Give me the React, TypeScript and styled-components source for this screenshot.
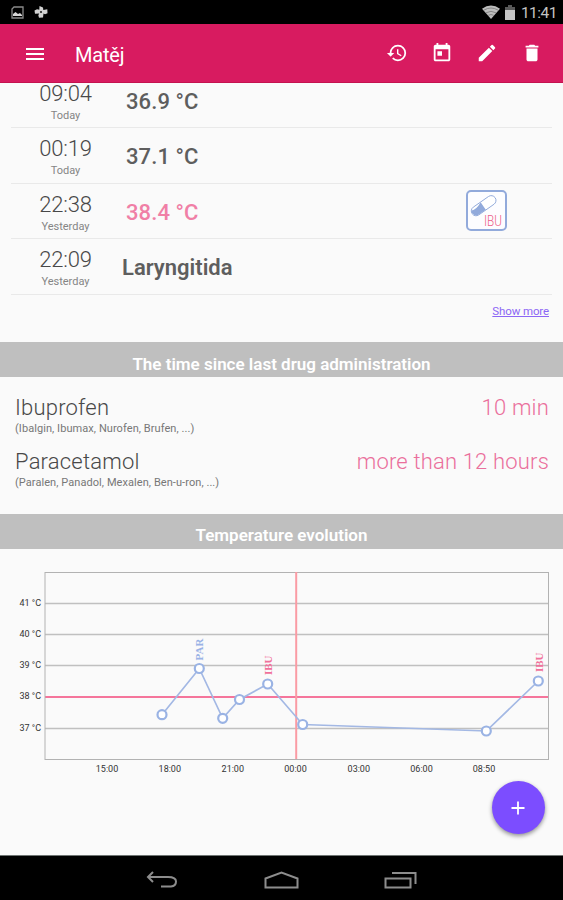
import React from "react";
import styled, { createGlobalStyle } from "styled-components";

const GlobalStyle = createGlobalStyle`
  * { box-sizing: border-box; }
  body { margin: 0; background: #fafafa; font-family: Roboto, sans-serif; }
`;

const Screen = styled.div`
  width: 563px;
  height: 900px;
  display: flex;
  flex-direction: column;
  overflow: hidden;
  background: #fafafa;
  color: #5e5e5e;
`;

const StatusBar = styled.header`
  flex: none;
  height: 24px;
  padding: 0 6px 0 11px;
  display: flex;
  align-items: center;
  background: #000;
  color: #c4c4c4;
`;

const StatusGroup = styled.div<{ $gap: number; $end?: boolean }>`
  display: flex;
  align-items: center;
  gap: ${(p) => p.$gap}px;
  margin-left: ${(p) => (p.$end ? "auto" : "0")};
`;

const Clock = styled.span`
  font-size: 15.5px;
  line-height: 24px;
  letter-spacing: -0.5px;
  padding: 2px 0 0 1px;
`;

const AppBar = styled.nav`
  flex: none;
  height: 59px;
  padding: 0 20px 0 23px;
  display: flex;
  align-items: center;
  background: #d81b60;
  border-bottom: 1px solid #c4124f;
  color: #fff;
`;

const Title = styled.h1`
  margin: 3px 0 0 28px;
  flex: 1;
  font-size: 20px;
  line-height: 24px;
  font-weight: 400;
  letter-spacing: -0.2px;
`;

const Actions = styled.div`
  display: flex;
  gap: 23px;
`;

const IconButton = styled.button`
  border: 0;
  padding: 0;
  background: none;
  color: inherit;
  display: flex;
`;

const MenuButton = styled(IconButton)`
  margin-top: 2px;
`;

const Content = styled.main`
  position: relative;
  flex: none;
  height: 772px;
  overflow: hidden;
`;

const Records = styled.ul`
  list-style: none;
  margin: -10.5px 11px 0;
  padding: 0;
`;

const Record = styled.li`
  height: 55.5px;
  display: flex;
  border-bottom: 1px solid #e9e9e9;
`;

const When = styled.div`
  width: 109px;
  flex: none;
  text-align: center;
`;

const Time = styled.div`
  margin-top: 11px;
  font-size: 22px;
  line-height: 20px;
  font-weight: 300;
  letter-spacing: -0.15px;
  color: #484848;
`;

const Day = styled.div`
  font-size: 11px;
  line-height: 15px;
  margin-top: 4px;
  color: #858585;
`;

const Value = styled.div<{ $high?: boolean; $note?: boolean }>`
  flex: 1;
  margin-top: 15px;
  padding-left: ${(p) => (p.$note ? 2 : 6)}px;
  font-size: 22px;
  line-height: 27px;
  font-weight: ${(p) => (p.$note ? 600 : 500)};
  letter-spacing: ${(p) => (p.$note ? 0 : 0.1)}px;
  color: ${(p) => (p.$high ? "#f07fa6" : "#5e5e5e")};
`;

const DrugBadge = styled.div`
  margin: 6.5px 45px 0 0;
  width: 41px;
  height: 41px;
`;

const MoreRow = styled.div`
  height: 47.5px;
  padding: 5px 14px 0 0;
  text-align: right;
`;

const MoreLink = styled.a`
  font-size: 11.5px;
  line-height: 16px;
  letter-spacing: -0.12px;
  text-decoration: underline;
  color: #8c66f5;
`;

const SectionHeader = styled.h2`
  margin: 0;
  height: 35px;
  padding-top: 8px;
  display: flex;
  align-items: center;
  justify-content: center;
  background: #bfbfbf;
  color: #fff;
  font-size: 17px;
  line-height: 20px;
  font-weight: 600;
`;

const Drugs = styled.section`
  height: 136.5px;
  padding: 16.5px 14px 0 15px;
`;

const Drug = styled.div`
  height: 54px;
`;

const DrugLine = styled.div`
  display: flex;
  justify-content: space-between;
  font-size: 22px;
  line-height: 27px;
`;

const DrugName = styled.span`
  color: #484848;
  font-weight: 300;
  letter-spacing: 0.2px;
`;

const Elapsed = styled.span`
  color: #ea6f9c;
  font-weight: 300;
  letter-spacing: 0.18px;
`;

const Brands = styled.div`
  font-size: 11px;
  line-height: 14px;
  margin-top: 1px;
  letter-spacing: 0.07px;
  color: #777;
`;

const ChartBox = styled.section`
  height: 240px;
  svg { display: block; }
`;

const Fab = styled.button`
  position: absolute;
  right: 18.5px;
  bottom: 21px;
  width: 53px;
  height: 53px;
  padding: 0;
  border: 0;
  border-radius: 50%;
  display: flex;
  align-items: center;
  justify-content: center;
  background: #7c4dff;
  box-shadow: 0 2px 4px rgba(0, 0, 0, 0.42);
`;

const NavBar = styled.footer`
  flex: none;
  height: 45px;
  display: flex;
  align-items: center;
  justify-content: center;
  gap: 85px;
  padding-top: 3px;
  background: #000;
  border-top: 1px solid #6e7472;
`;

const records = [
  { time: "09:04", day: "Today", value: "36.9 °C" },
  { time: "00:19", day: "Today", value: "37.1 °C" },
  { time: "22:38", day: "Yesterday", value: "38.4 °C", high: true, drug: true },
  { time: "22:09", day: "Yesterday", value: "Laryngitida", note: true },
];

const drugs = [
  { name: "Ibuprofen", brands: "(Ibalgin, Ibumax, Nurofen, Brufen, ...)", elapsed: "10 min" },
  { name: "Paracetamol", brands: "(Paralen, Panadol, Mexalen, Ben-u-ron, ...)", elapsed: "more than 12 hours" },
];

const Glyph = ({ d, size = 24 }: { d: string; size?: number }) => (
  <svg width={size} height={size} viewBox="0 0 24 24" fill="currentColor">
    <path d={d} />
  </svg>
);

const actionIcons = [
  {
    label: "History",
    d: "M13 3a9 9 0 0 0-9 9H1l3.89 3.89.07.14L9 12H6c0-3.87 3.13-7 7-7s7 3.13 7 7-3.13 7-7 7c-1.93 0-3.68-.79-4.94-2.06l-1.42 1.42A8.954 8.954 0 0 0 13 21a9 9 0 0 0 0-18zm-1 5v5l4.28 2.54.72-1.21-3.5-2.08V8H12z",
  },
  {
    label: "Calendar",
    d: "M19 3h-1V1h-2v2H8V1H6v2H5c-1.11 0-2 .9-2 2v14c0 1.1.89 2 2 2h14c1.1 0 2-.9 2-2V5c0-1.1-.9-2-2-2zm0 16H5V8h14v11zM7 10h5v5H7z",
  },
  {
    label: "Edit",
    d: "M3 17.25V21h3.75L17.81 9.94l-3.75-3.75L3 17.25zM20.71 7.04a1 1 0 0 0 0-1.41l-2.34-2.34a1 1 0 0 0-1.41 0l-1.83 1.83 3.75 3.75 1.83-1.83z",
  },
  { label: "Delete", d: "M6 19c0 1.1.9 2 2 2h8c1.1 0 2-.9 2-2V7H6v12zM19 4h-3.5l-1-1h-5l-1 1H5v2h14V4z" },
];

const PictureIcon = () => (
  <svg width="13" height="13" viewBox="0 0 13 13">
    <path d="M3 1h9v11H1V3z" fill="none" stroke="#8b8b8b" strokeWidth="1.3" />
    <path d="M2 10V8l2.500-2 2.500 2 2-1 2 2v1z" fill="#d6d6d6" />
  </svg>
);

const PinwheelIcon = () => (
  <svg width="14" height="14" viewBox="0 0 14 14" fill="#d2d2d2">
    <path d="M5.500 1l3.500 1.500.3 2.500 4-.8.2 4-2.500 1-1.500-.7-.5 4-4 .3-.7-2.500.9-1.800L1 8.800.500 5.500l2.500-1.300 2.300.6z" />
    <circle cx="7" cy="7" r="1.100" fill="#222" />
  </svg>
);

const WifiIcon = () => (
  <svg width="18" height="14" viewBox="0 0 18 14">
    <path d="M0 3.800Q9-2.600 18 3.800L9 14z" fill="#bdbdbd" />
    <path d="M1.800 5.200Q9 .8 16.200 5.200M4 7.800q5-3 10 0M6.300 10.300q2.700-1.500 5.400 0" fill="none" stroke="#777" strokeWidth=".8" />
  </svg>
);

const BatteryIcon = () => (
  <svg width="10" height="15" viewBox="0 0 10 15">
    <path d="M3 0h4v2h3v4H0V2h3z" fill="#595959" />
    <path d="M0 5h10v10H0z" fill="#c4c4c4" />
  </svg>
);

const PillIcon = () => (
  <svg width="41" height="41" viewBox="0 0 41 41">
    <rect x="1" y="1" width="39" height="39" rx="4" fill="#fdfdff" stroke="#92aadb" strokeWidth="2" />
    <g transform="rotate(-35 17.500 15.500)">
      <rect x="3.500" y="11" width="28" height="9.500" rx="4.700" fill="#fff" stroke="#92aadb" strokeWidth=".9" />
      <path d="M17 11.200v9H8.500a4.500 4.500 0 0 1-3.500-7.500q4 2.300 12-1.500z" fill="#92aadb" />
    </g>
    <text x="18" y="35.500" textLength="18" lengthAdjust="spacingAndGlyphs" fontFamily="Roboto, sans-serif" fontSize="15.500" fontWeight="300" fill="#ec5c87">
      IBU
    </text>
  </svg>
);

const points: [number, number][] = [
  [162, 165.700],
  [199.300, 119.500],
  [222.700, 169.300],
  [239.500, 150.500],
  [267.700, 135],
  [302.700, 175.500],
  [486.300, 182],
  [538.300, 132],
];

const gridLines = [
  { label: "41 °C", y: 54.500 },
  { label: "40 °C", y: 85.500 },
  { label: "39 °C", y: 116.500 },
  { label: "38 °C", y: 148, limit: true },
  { label: "37 °C", y: 179.500 },
];

const hours: [string, number][] = [
  ["15:00", 107],
  ["18:00", 169.800],
  ["21:00", 232.800],
  ["00:00", 295.500],
  ["03:00", 358.800],
  ["06:00", 421.500],
  ["08:50", 484],
];

const doses = [
  { name: "PAR", x: 203, y: 111.500, color: "#9ab3e6", length: 22 },
  { name: "IBU", x: 271.500, y: 126, color: "#f0719b", length: 19.500 },
  { name: "IBU", x: 542.500, y: 123, color: "#f0719b", length: 19.500 },
];

const TemperatureChart = () => (
  <svg width="563" height="240" viewBox="0 0 563 240" fontFamily="Roboto, sans-serif">
    {gridLines.map((g) => (
      <g key={g.label}>
        <line x1="45" x2="548" y1={g.y} y2={g.y} stroke={g.limit ? "#f5759b" : "#c0c0c0"} strokeWidth={g.limit ? 2 : 1.300} />
        <text x="19.500" y={g.y + 2} fontSize="9" textLength="21.500" fill="#333">
          {g.label}
        </text>
      </g>
    ))}
    <rect x="45" y="23.500" width="503.500" height="187" fill="none" stroke="#b2b2b2" />
    <line x1="296.200" x2="296.200" y1="23" y2="210" stroke="#fa9ba4" strokeWidth="2" />
    {hours.map(([label, x]) => (
      <text key={label} x={x} y="223" fontSize="9" textAnchor="middle" fill="#333">
        {label}
      </text>
    ))}
    <polyline points={points.map((p) => p.join(",")).join(" ")} fill="none" stroke="#a3b8e4" strokeWidth="1.700" />
    {points.map(([x, y]) => (
      <circle key={x} cx={x} cy={y} r="4.500" fill="#fff" stroke="#9ab3e4" strokeWidth="2.200" />
    ))}
    {doses.map((d) => (
      <text
        key={d.x}
        transform={`translate(${d.x} ${d.y}) rotate(-90)`}
        fontFamily="Liberation Serif, serif"
        fontWeight="700"
        fontSize="11"
        textLength={d.length}
        fill={d.color}
      >
        {d.name}
      </text>
    ))}
  </svg>
);

const navIcons = [
  { label: "Back", d: "M7 1 2 6l5 5M2 6h20q8 0 8 4.500t-5 5H15", w: 33 },
  { label: "Home", d: "M1.500 16.500v-9L17.500 1.500l16 6v9z", w: 35 },
  { label: "Recents", d: "M1.500 7.500h25v9h-25zM8 2h23.500v11", w: 34 },
];

export default function App() {
  return (
    <>
      <GlobalStyle />
      <Screen>
        <StatusBar>
          <StatusGroup $gap={10}>
            <PictureIcon />
            <PinwheelIcon />
          </StatusGroup>
          <StatusGroup $gap={5} $end>
            <WifiIcon />
            <BatteryIcon />
            <Clock>11:41</Clock>
          </StatusGroup>
        </StatusBar>
        <AppBar>
          <MenuButton aria-label="Menu">
            <Glyph d="M3 18h18v-2H3v2zm0-5h18v-2H3v2zm0-7v2h18V6H3z" />
          </MenuButton>
          <Title>Matěj</Title>
          <Actions>
            {actionIcons.map((a) => (
              <IconButton key={a.label} aria-label={a.label}>
                <Glyph d={a.d} size={22} />
              </IconButton>
            ))}
          </Actions>
        </AppBar>
        <Content>
          <Records>
            {records.map((r) => (
              <Record key={r.time}>
                <When>
                  <Time>{r.time}</Time>
                  <Day>{r.day}</Day>
                </When>
                <Value $high={r.high} $note={r.note}>
                  {r.value}
                </Value>
                {r.drug && (
                  <DrugBadge>
                    <PillIcon />
                  </DrugBadge>
                )}
              </Record>
            ))}
          </Records>
          <MoreRow>
            <MoreLink>Show more</MoreLink>
          </MoreRow>
          <SectionHeader>The time since last drug administration</SectionHeader>
          <Drugs>
            {drugs.map((d) => (
              <Drug key={d.name}>
                <DrugLine>
                  <DrugName>{d.name}</DrugName>
                  <Elapsed>{d.elapsed}</Elapsed>
                </DrugLine>
                <Brands>{d.brands}</Brands>
              </Drug>
            ))}
          </Drugs>
          <SectionHeader>Temperature evolution</SectionHeader>
          <ChartBox>
            <TemperatureChart />
          </ChartBox>
          <Fab aria-label="Add">
            <svg width="14" height="14" viewBox="0 0 14 14" stroke="#fff" strokeWidth="1.800">
              <path d="M7 .5v13M.5 7h13" />
            </svg>
          </Fab>
        </Content>
        <NavBar>
          {navIcons.map((n) => (
            <svg key={n.label} width={n.w} height="18" viewBox={`0 0 ${n.w} 18`} fill="none" stroke="#8d8d8d" strokeWidth="2">
              <path d={n.d} />
            </svg>
          ))}
        </NavBar>
      </Screen>
    </>
  );
}
